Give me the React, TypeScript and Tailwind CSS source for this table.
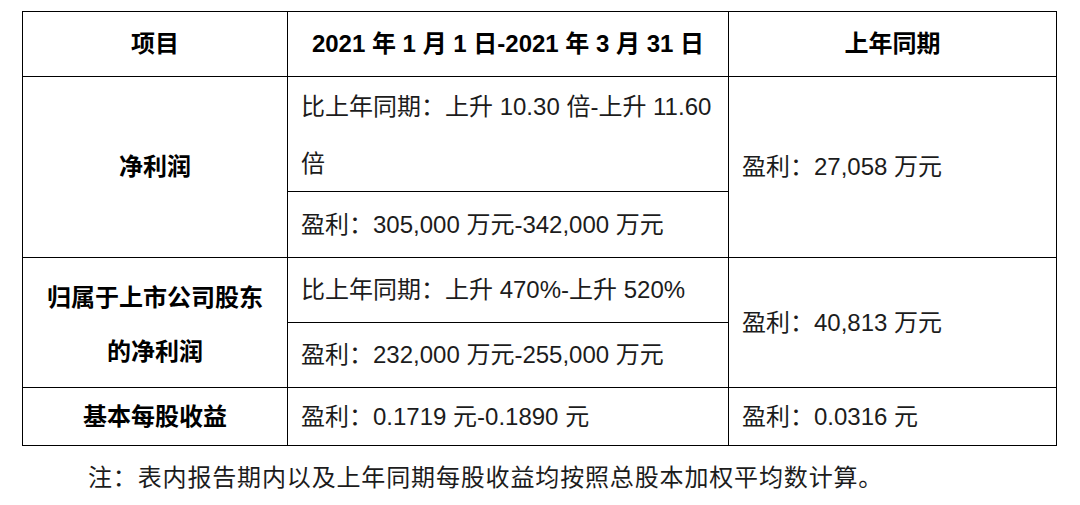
import React from "react";

const cell = "border-r border-b border-black flex items-center";
const body = "pl-[13px] text-[#1c1c1c] whitespace-nowrap";
const label = "justify-center text-center font-bold text-black";

export default function App() {
    return (
        <div className="w-[1080px] h-[505px] bg-white font-['Liberation_Sans','Noto_Sans_CJK_SC',sans-serif] text-[24px] leading-none">
            <div className="pt-[11px] pl-[22px]">
                <div className="grid grid-cols-[265px_441px_328px] grid-rows-[65px_115px_66px_65px_65px_58px] border-l border-t border-black w-[1035px]">
                    {/* header */}
                    <div className={`${cell} ${label}`}>项目</div>
                    <div className={`${cell} ${label}`}>
                        2021 年 1 月 1 日-2021 年 3 月 31 日
                    </div>
                    <div className={`${cell} ${label}`}>上年同期</div>

                    {/* 净利润 */}
                    <div className={`${cell} ${label} row-span-2`}>净利润</div>
                    <div className={`${cell} ${body} leading-[57px] pt-[2px]`}>
                        <span>
                            比上年同期：上升 10.30 倍-上升 11.60
                            <br />倍
                        </span>
                    </div>
                    <div className={`${cell} ${body} row-span-2`}>
                        盈利：27,058 万元
                    </div>
                    <div className={`${cell} ${body}`}>
                        盈利：305,000 万元-342,000 万元
                    </div>

                    {/* 归属于上市公司股东的净利润 */}
                    <div className={`${cell} ${label} row-span-2 leading-[54px] pt-[5px]`}>
                        <span>
                            归属于上市公司股东
                            <br />
                            的净利润
                        </span>
                    </div>
                    <div className={`${cell} ${body}`}>
                        比上年同期：上升 470%-上升 520%
                    </div>
                    <div className={`${cell} ${body} row-span-2`}>
                        盈利：40,813 万元
                    </div>
                    <div className={`${cell} ${body}`}>
                        盈利：232,000 万元-255,000 万元
                    </div>

                    {/* 基本每股收益 */}
                    <div className={`${cell} ${label}`}>基本每股收益</div>
                    <div className={`${cell} ${body}`}>
                        盈利：0.1719 元-0.1890 元
                    </div>
                    <div className={`${cell} ${body}`}>盈利：0.0316 元</div>
                </div>
            </div>
            <p className="mt-[14px] pl-[88px] text-[#1c1c1c] leading-[36px] tracking-[0.85px]">
                注：表内报告期内以及上年同期每股收益均按照总股本加权平均数计算。
            </p>
        </div>
    );
}
